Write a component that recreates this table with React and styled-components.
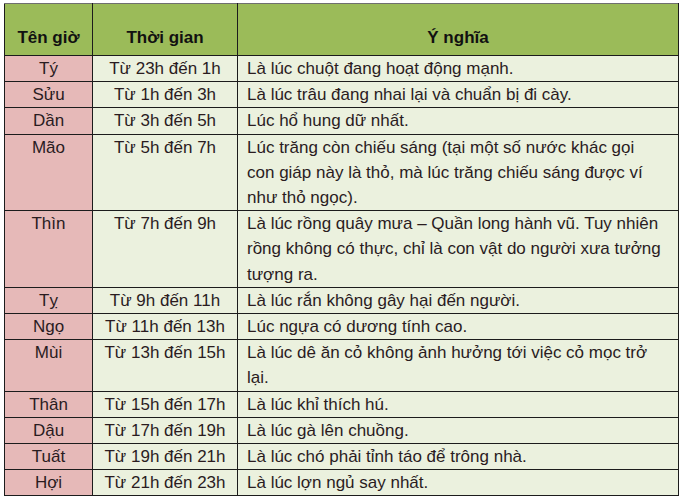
import React from "react";
import styled, { createGlobalStyle } from "styled-components";

const Global = createGlobalStyle`
  html, body { margin: 0; padding: 0; background: #ffffff; }
  body { font-family: "Liberation Sans", Arial, sans-serif; }
`;

const Frame = styled.div`
  width: 680px;
  height: 500px;
  box-sizing: border-box;
  padding: 3px 2px 0 4px;
  background: #ffffff;
`;

const Table = styled.table`
  width: 674px;
  table-layout: fixed;
  border-collapse: collapse;
  border-top: 1px solid #6f6f6f;
  font-family: "Liberation Sans", Arial, sans-serif;
  font-size: 17px;
  color: #2a1c1f;
`;

const HeadCell = styled.th`
  height: 46px;
  background: #9bbb59;
  border: 1px solid #1c1c1c;
  border-top-color: #6f6f6f;
  font-weight: bold;
  color: #111;
  text-align: center;
  vertical-align: bottom;
  line-height: 25px;
  padding: 0 0 5px 0;
`;

const Cell = styled.td`
  border: 1px solid #1c1c1c;
  vertical-align: top;
  padding: 0 ${(p) => (p.$align === "left" ? "4px" : "0")} 0
    ${(p) => (p.$align === "left" ? "9px" : "0")};
  line-height: 25.2px;
  text-align: ${(p) => p.$align || "center"};
  background: ${(p) => (p.$tone === "pink" ? "#e6b9b8" : "#ebf1de")};
  white-space: nowrap;
  overflow: hidden;
`;

const rows = [
  ["Tý", "Từ 23h đến 1h", ["Là lúc chuột đang hoạt động mạnh."]],
  ["Sửu", "Từ 1h đến 3h", ["Là lúc trâu đang nhai lại và chuẩn bị đi cày."]],
  ["Dần", "Từ 3h đến 5h", ["Lúc hổ hung dữ nhất."]],
  [
    "Mão",
    "Từ 5h đến 7h",
    [
      "Lúc trăng còn chiếu sáng (tại một số nước khác gọi",
      "con giáp này là thỏ, mà lúc trăng chiếu sáng được ví",
      "như thỏ ngọc).",
    ],
  ],
  [
    "Thìn",
    "Từ 7h đến 9h",
    [
      "Là lúc rồng quây mưa – Quần long hành vũ. Tuy nhiên",
      "rồng không có thực, chỉ là con vật do người xưa tưởng",
      "tượng ra.",
    ],
  ],
  ["Tỵ", "Từ 9h đến 11h", ["Là lúc rắn không gây hại đến người."]],
  ["Ngọ", "Từ 11h đến 13h", ["Lúc ngựa có dương tính cao."]],
  [
    "Mùi",
    "Từ 13h đến 15h",
    ["Là lúc dê ăn cỏ không ảnh hưởng tới việc cỏ mọc trở", "lại."],
  ],
  ["Thân", "Từ 15h đến 17h", ["Là lúc khỉ thích hú."]],
  ["Dậu", "Từ 17h đến 19h", ["Là lúc gà lên chuồng."]],
  ["Tuất", "Từ 19h đến 21h", ["Là lúc chó phải tỉnh táo để trông nhà."]],
  ["Hợi", "Từ 21h đến 23h", ["Là lúc lợn ngủ say nhất."]],
];

export default function App() {
  return (
    <>
      <Global />
      <Frame>
        <Table>
          <colgroup>
            <col style={{ width: 88 }} />
            <col style={{ width: 145 }} />
            <col style={{ width: 441 }} />
          </colgroup>
          <thead>
            <tr>
              <HeadCell>Tên giờ</HeadCell>
              <HeadCell>Thời gian</HeadCell>
              <HeadCell>Ý nghĩa</HeadCell>
            </tr>
          </thead>
          <tbody>
            {rows.map(([name, time, lines]) => (
              <tr key={name}>
                <Cell $tone="pink">{name}</Cell>
                <Cell>{time}</Cell>
                <Cell $align="left">
                  {lines.map((l, i) => (
                    <React.Fragment key={i}>
                      {i > 0 && <br />}
                      {l}
                    </React.Fragment>
                  ))}
                </Cell>
              </tr>
            ))}
          </tbody>
        </Table>
      </Frame>
    </>
  );
}
